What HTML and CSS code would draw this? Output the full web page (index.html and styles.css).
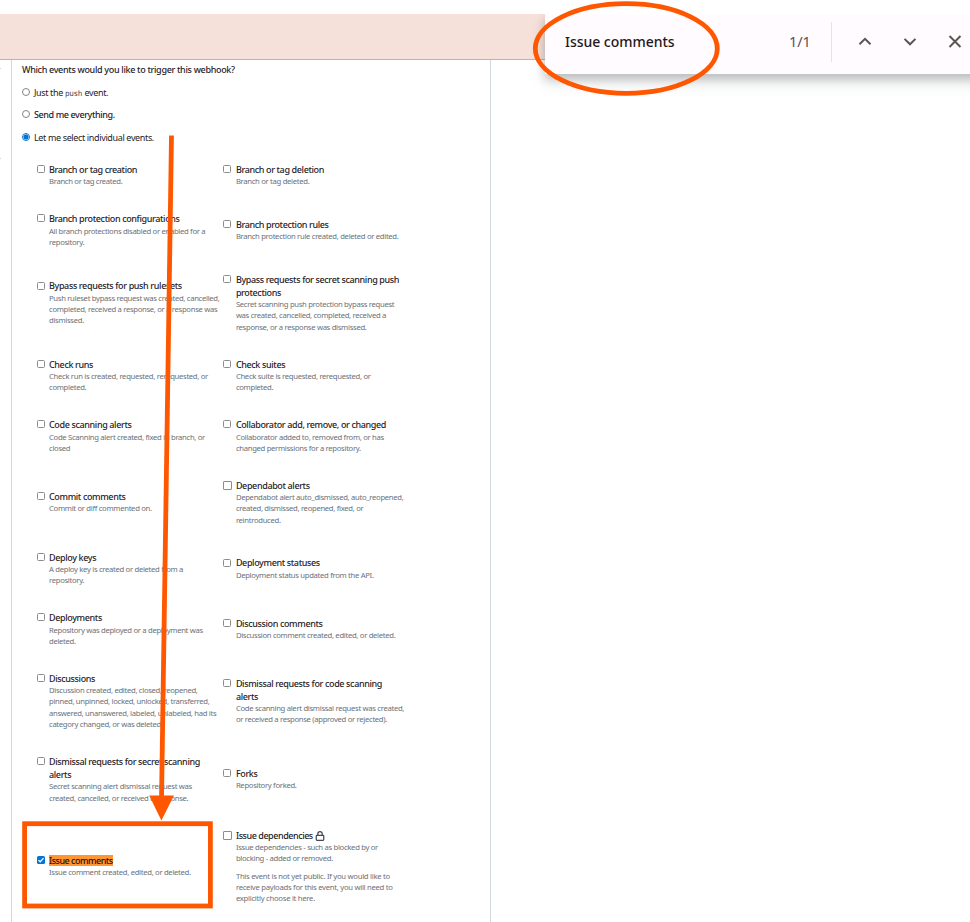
FILE: index.html
```html
<!DOCTYPE html>
<html lang="en">
<head>
<meta charset="utf-8">
<title>Webhook events</title>
<link rel="stylesheet" href="styles.css">
</head>
<body>
<div class="banner"></div>
<main class="page">
  <aside class="side"><i></i><i></i></aside>
  <section class="panel">
    <h2>Which events would you like to trigger this webhook?</h2>
    <label class="choice"><span class="radio"></span><span>Just the <code>push</code> event.</span></label>
    <label class="choice"><span class="radio"></span><span class="strongish">Send me everything.</span></label>
    <label class="choice"><span class="radio on"></span><span class="select">Let me select individual events.</span></label>
    <div class="events">
      <div class="event"><span class="box"></span><div><h3>Branch or tag creation</h3><p>Branch or tag created.</p></div></div>
      <div class="event"><span class="box"></span><div><h3>Branch or tag deletion</h3><p>Branch or tag deleted.</p></div></div>
      <div class="event"><span class="box"></span><div><h3>Branch protection configurations</h3><p>All branch protections disabled or enabled for a<br>repository.</p></div></div>
      <div class="event"><span class="box"></span><div><h3>Branch protection rules</h3><p>Branch protection rule created, deleted or edited.</p></div></div>
      <div class="event"><span class="box"></span><div><h3>Bypass requests for push rulesets</h3><p>Push ruleset bypass request was created, cancelled,<br>completed, received a response, or a response was<br>dismissed.</p></div></div>
      <div class="event"><span class="box"></span><div><h3>Bypass requests for secret scanning push<br>protections</h3><p>Secret scanning push protection bypass request<br>was created, cancelled, completed, received a<br>response, or a response was dismissed.</p></div></div>
      <div class="event"><span class="box"></span><div><h3>Check runs</h3><p>Check run is created, requested, rerequested, or<br>completed.</p></div></div>
      <div class="event"><span class="box"></span><div><h3>Check suites</h3><p>Check suite is requested, rerequested, or<br>completed.</p></div></div>
      <div class="event"><span class="box"></span><div><h3>Code scanning alerts</h3><p>Code Scanning alert created, fixed in branch, or<br>closed</p></div></div>
      <div class="event"><span class="box"></span><div><h3>Collaborator add, remove, or changed</h3><p>Collaborator added to, removed from, or has<br>changed permissions for a repository.</p></div></div>
      <div class="event"><span class="box"></span><div><h3>Commit comments</h3><p>Commit or diff commented on.</p></div></div>
      <div class="event"><span class="box large"></span><div><h3>Dependabot alerts</h3><p>Dependabot alert auto_dismissed, auto_reopened,<br>created, dismissed, reopened, fixed, or<br>reintroduced.</p></div></div>
      <div class="event"><span class="box"></span><div><h3>Deploy keys</h3><p>A deploy key is created or deleted from a<br>repository.</p></div></div>
      <div class="event"><span class="box"></span><div><h3>Deployment statuses</h3><p>Deployment status updated from the API.</p></div></div>
      <div class="event"><span class="box"></span><div><h3>Deployments</h3><p>Repository was deployed or a deployment was<br>deleted.</p></div></div>
      <div class="event"><span class="box"></span><div><h3>Discussion comments</h3><p>Discussion comment created, edited, or deleted.</p></div></div>
      <div class="event"><span class="box"></span><div><h3>Discussions</h3><p>Discussion created, edited, closed, reopened,<br>pinned, unpinned, locked, unlocked, transferred,<br>answered, unanswered, labeled, unlabeled, had its<br>category changed, or was deleted.</p></div></div>
      <div class="event"><span class="box"></span><div><h3>Dismissal requests for code scanning<br>alerts</h3><p>Code scanning alert dismissal request was created,<br>or received a response (approved or rejected).</p></div></div>
      <div class="event"><span class="box"></span><div><h3>Dismissal requests for secret scanning<br>alerts</h3><p>Secret scanning alert dismissal request was<br>created, cancelled, or received a response.</p></div></div>
      <div class="event"><span class="box"></span><div><h3>Forks</h3><p>Repository forked.</p></div></div>
      <div class="event"><span class="box on"><svg viewBox="0 0 8 8"><path d="M1.5 4.1 3.2 5.8 6.6 2.1"/></svg></span><div><h3><mark>Issue comments</mark></h3><p>Issue comment created, edited, or deleted.</p></div></div>
      <div class="event"><span class="box large"></span><div><h3><span class="tight">Issue dependencies</span> <svg class="lock" viewBox="0 0 16 16"><rect x="2" y="7" width="12" height="7.8" rx="1.2"/><path d="M4.500 7V4.600a3.500 3.500 0 0 1 7 0V7"/></svg></h3><p>Issue dependencies - such as blocked by or<br>blocking - added or removed.</p><p class="note">This event is not yet public. If you would like to<br>receive payloads for this event, you will need to<br>explicitly choose it here.</p></div></div>
    </div>
  </section>
</main>
<div class="findclip">
  <div class="findbar">
    <span class="query">Issue comments</span>
    <span class="count">1/1</span>
    <span class="rule"></span>
    <svg class="ic" viewBox="0 0 16 16"><path d="M2.500 10.300 8 4.900l5.500 5.400"/></svg>
    <svg class="ic" viewBox="0 0 16 16"><path d="M2.500 4.900 8 10.300l5.500-5.400"/></svg>
    <svg class="ic" viewBox="0 0 16 16"><path d="M2.500 2 13.500 13M13.500 2 2.500 13"/></svg>
  </div>
</div>
<svg class="marks" viewBox="0 0 970 922">
  <ellipse cx="626.300" cy="48.500" rx="91" ry="44.800"/>
  <path d="M171.500 135.500 161.500 800"/>
  <rect x="24.600" y="823.700" width="185.800" height="82.300"/>
  <path class="head" d="M149.200 795.500H174L161.400 820.500Z"/>
</svg>
</body>
</html>
```
FILE: styles.css
```css
* { box-sizing: border-box; }
body {
  margin: 0;
  width: 970px;
  height: 922px;
  padding-top: 14px;
  overflow: hidden;
  position: relative;
  background: #fff;
  color: #1f2328;
  font-family: "Noto Sans", "Open Sans", sans-serif;
}
h2, h3, p { margin: 0; white-space: nowrap; }
.banner {
  width: 545px;
  height: 46px;
  background: #f5e0da;
  border-bottom: 1px solid #c6b0ac;
}
.page { display: flex; height: 862px; }
.side { width: 11px; padding-top: 8px; }
.side i { display: block; width: 1px; height: 1px; margin-bottom: 89px; background: #d0d7de; }
.panel {
  width: 480px;
  padding: 3px 0 0 10px;
  border-left: 1px solid #d0d7de;
  border-right: 1px solid #d0d7de;
}
h2 { font-size: 9px; line-height: 14px; font-weight: 500; letter-spacing: -0.32px; }
.choice {
  display: flex;
  align-items: center;
  gap: 4px;
  height: 14px;
  margin-top: 8.400px;
  font-size: 9px;
  white-space: nowrap;
  letter-spacing: -0.36px;
}
.strongish { font-weight: 500; letter-spacing: -0.4px; }
.choice code { font-family: "DejaVu Sans Mono", monospace; font-size: 7.600px; letter-spacing: -0.3px; color: #40464d; margin-right: 0.500px; }
.radio {
  width: 8px;
  height: 8px;
  border: 1px solid #858585;
  border-radius: 50%;
  margin-top: -1px;
}
.radio.on { border-color: #0075d8; background: radial-gradient(circle, #0075d8 0 2.300px, #fff 2.800px); }
.events {
  display: grid;
  grid-template-columns: 186.400px 186.400px;
  row-gap: 25.170px;
  align-items: center;
  margin: 19.800px 0 0 15px;
}
.event { display: flex; gap: 4px; }
.event:nth-child(even) { gap: 4.500px; }
.box {
  flex: none;
  width: 8px;
  height: 8px;
  margin-top: 1.200px;
  border: 1px solid #8c8c8c;
  border-radius: 1.500px;
}
.box.large { width: 9px; height: 9px; margin-right: -1px; border-radius: 1px; }
.box.on { border: 0; background: #0075d8; }
.box svg { display: block; width: 8px; height: 8px; fill: none; stroke: #fff; stroke-width: 1.300; }
h3 { font-size: 9px; line-height: 12.900px; font-weight: 500; letter-spacing: -0.37px; }
.event p { font-size: 7.700px; line-height: 11.270px; letter-spacing: -0.315px; color: #6b7178; }
.event h3 + p { margin-top: -0.600px; margin-bottom: 0.600px; }
.event p.note { margin-top: 6.400px; letter-spacing: -0.28px; }
mark { display: inline-block; height: 11px; line-height: 11px; background: #ff9632; color: #1f1208; letter-spacing: -0.5px; vertical-align: -0.500px; }
.tight { letter-spacing: -0.45px; }
.lock { width: 10px; height: 10px; vertical-align: -2px; fill: none; stroke: #454a50; stroke-width: 2; }
.findclip {
  position: absolute;
  left: 505px;
  top: 14px;
  width: 465px;
  height: 100px;
  overflow: hidden;
  padding-left: 40px;
}
.findbar {
  display: flex;
  align-items: center;
  width: 445px;
  height: 60px;
  padding: 0 0 5px 20px;
  background: #fffbff;
  box-shadow: 0 5px 10px rgba(20, 30, 28, .2), 0 8px 16px rgba(20, 30, 28, .13);
  border-radius: 4px 0 0 0;
}
.query { width: 224px; font-size: 14px; font-weight: 500; letter-spacing: -0.03px; color: #241917; white-space: nowrap; }
.count { width: 42px; padding-bottom: 1px; font-size: 14.500px; letter-spacing: -0.15px; color: #5a514e; }
.query, .count { flex: none; }
.rule { flex: none; width: 1px; height: 40px; margin-right: 25px; background: #f3ded8; }
.ic { flex: none; width: 16px; height: 16px; margin-right: 29px; fill: none; stroke: #5b5451; stroke-width: 2; }
.marks { position: absolute; inset: 0; width: 970px; height: 922px; fill: none; stroke: #ff5700; stroke-width: 4.800; pointer-events: none; }
.marks .head { fill: #ff5700; stroke: none; }
```
